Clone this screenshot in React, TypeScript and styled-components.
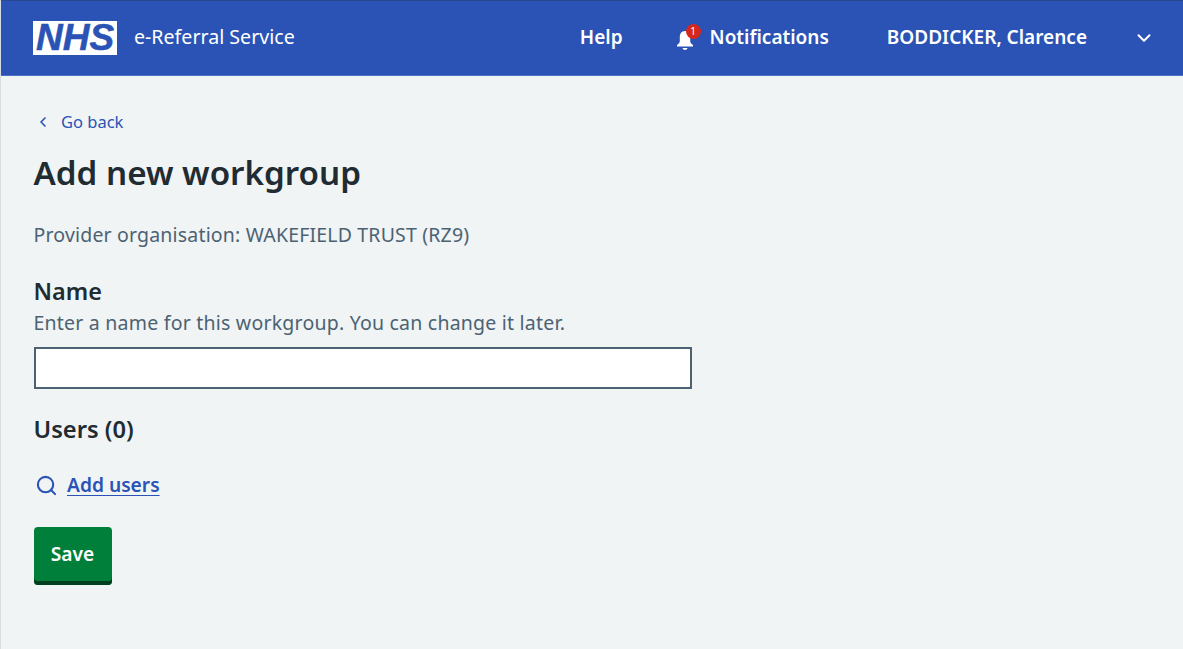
import styled, { createGlobalStyle } from "styled-components";
import { ChevronDown, ChevronLeft, Search } from "lucide-react";

const GlobalStyle = createGlobalStyle`
    html, body {
        margin: 0;
        padding: 0;
        height: 100%;
        background: #f0f4f5;
    }
    body {
        font-family: "Noto Sans", "Open Sans", sans-serif;
        color: #212b32;
    }
`;

const Page = styled.div`
    height: 649px;
    display: flex;
    flex-direction: column;
    overflow: hidden;
    border-left: 1px solid #d8dde0;
    box-sizing: border-box;
`;

const Header = styled.header`
    height: 76px;
    flex: none;
    box-sizing: border-box;
    background: #2a53b5;
    border-top: 1px solid #26488f;
    border-bottom: 1px solid #4a70c4;
    margin-left: -1px;
    padding: 0 28px 3px 33px;
    display: flex;
    align-items: center;
    color: #fff;
`;

const Logo = styled.div`
    width: 84px;
    height: 34px;
    flex: none;
    margin-top: 2px;
    background: #fff;
    color: #2a53b5;
    font-family: "Liberation Sans", sans-serif;
    font-weight: 700;
    font-style: italic;
    font-size: 37px;
    line-height: 34px;
    -webkit-text-stroke: 0.5px #2a53b5;
    text-align: center;
`;

const ServiceName = styled.div`
    margin-left: 17px;
    font-size: 19.6px;
`;

const Nav = styled.nav`
    margin-left: auto;
    display: flex;
    align-items: center;
    font-size: 19px;
    font-weight: 600;
`;

const NavItem = styled.a`
    color: #fff;
    display: flex;
    align-items: center;
`;

const BellWrap = styled.span`
    position: relative;
    width: 20px;
    height: 30px;
    margin: 0 15px 0 52px;
    display: flex;
    align-items: flex-end;
`;

const Badge = styled.span`
    position: absolute;
    top: 2px;
    left: 11px;
    width: 15px;
    height: 15px;
    border-radius: 50%;
    background: #d5281b;
    color: #fff;
    font-size: 10px;
    font-weight: 400;
    line-height: 15px;
    text-align: center;
`;

const UserName = styled(NavItem)`
    margin-left: 58px;
`;

const Caret = styled.span`
    margin-left: 46px;
    padding-top: 3px;
    display: flex;
`;

const Main = styled.main`
    flex: 1;
    padding: 35px 0 0 32.5px;
    display: flex;
    flex-direction: column;
    align-items: flex-start;
`;

const BackLink = styled.a`
    color: #2a53b5;
    font-size: 16.5px;
    line-height: 22px;
    display: flex;
    align-items: center;
    gap: 10px;
    margin-left: 1.5px;
`;

const Title = styled.h1`
    margin: 18px 0 0;
    font-size: 33.2px;
    line-height: 44px;
    font-weight: 600;
    color: #212b32;
`;

const Organisation = styled.p`
    margin: 28px 0 0;
    font-size: 19.5px;
    letter-spacing: 0.18px;
    line-height: 24px;
    color: #4c6272;
`;

const Label = styled.label`
    display: block;
    margin-top: 29px;
    font-size: 23.4px;
    line-height: 30px;
    font-weight: 600;
`;

const Hint = styled.div`
    margin-top: 5px;
    font-size: 19.5px;
    letter-spacing: 0.22px;
    line-height: 24px;
    color: #4c6272;
`;

const TextInput = styled.input`
    display: block;
    margin-top: 12px;
    width: 658px;
    height: 42px;
    box-sizing: border-box;
    background: #fff;
    border: 2px solid #4c6272;
    outline: none;
`;

const SectionTitle = styled.h2`
    margin: 24px 0 0;
    font-size: 23.7px;
    line-height: 32px;
    font-weight: 600;
`;

const AddLink = styled.a`
    margin-top: 28px;
    display: flex;
    align-items: center;
    gap: 9px;
    color: #2a53b5;
    font-size: 19.2px;
    line-height: 24px;
    font-weight: 600;
    margin-left: 1.5px;
`;

const Underlined = styled.span`
    text-decoration: underline;
    text-underline-offset: 3px;
`;

const SaveButton = styled.button`
    margin-top: 30px;
    width: 78px;
    height: 58px;
    padding: 0 0 6px;
    box-sizing: border-box;
    border: none;
    border-radius: 4px;
    background: #007f3b;
    box-shadow: inset 0 -4px 0 #00401e;
    color: #fff;
    font-family: inherit;
    font-size: 19.2px;
    font-weight: 600;
`;

export default function App() {
    return (
        <>
            <GlobalStyle />
            <Page>
                <Header>
                    <Logo>NHS</Logo>
                    <ServiceName>e-Referral Service</ServiceName>
                    <Nav>
                        <NavItem>Help</NavItem>
                        <BellWrap>
                            <svg width="20" height="25" viewBox="0 0 20 24" fill="#fff">
                                <path d="M10 3.500c-3.600 0-5.200 2.800-5.200 6v4.200c0 1.600-1.200 2.700-2.800 3.900v1.400h16v-1.400c-1.600-1.200-2.800-2.300-2.800-3.900V9.500c0-3.200-1.600-6-5.200-6z" />
                                <path d="M7.500 20.500h5c-.2 1.300-1.200 2-2.500 2s-2.300-.7-2.500-2z" />
                            </svg>
                            <Badge>1</Badge>
                        </BellWrap>
                        <NavItem>Notifications</NavItem>
                        <UserName>BODDICKER, Clarence</UserName>
                        <Caret>
                            <ChevronDown size={22} color="#fff" strokeWidth={2.2} />
                        </Caret>
                    </Nav>
                </Header>
                <Main>
                    <BackLink>
                        <ChevronLeft size={16} strokeWidth={2.5} />
                        Go back
                    </BackLink>
                    <Title>Add new workgroup</Title>
                    <Organisation>Provider organisation: WAKEFIELD TRUST (RZ9)</Organisation>
                    <Label htmlFor="name">Name</Label>
                    <Hint>Enter a name for this workgroup. You can change it later.</Hint>
                    <TextInput id="name" type="text" />
                    <SectionTitle>Users (0)</SectionTitle>
                    <AddLink>
                        <Search size={23} strokeWidth={2.2} />
                        <Underlined>Add users</Underlined>
                    </AddLink>
                    <SaveButton>Save</SaveButton>
                </Main>
            </Page>
        </>
    );
}
